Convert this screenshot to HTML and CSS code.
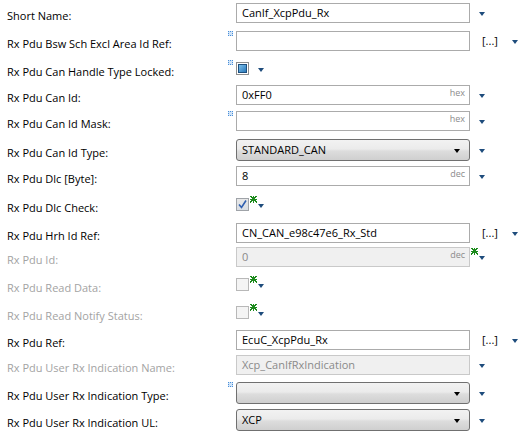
FILE: index.html
```html
<!DOCTYPE html>
<html>
<head>
<meta charset="utf-8">
<link rel="stylesheet" href="styles.css">
</head>
<body>
<div class="form">
  <div class="row gap2">
    <div class="lbl">Short Name:</div>
    <div class="ctl"><span class="mark"></span><div class="field"><span class="val">CanIf_XcpPdu_Rx</span></div><span class="star"></span><span class="menu"></span></div>
  </div>
  <div class="row gap2">
    <div class="lbl">Rx Pdu Bsw Sch Excl Area Id Ref:</div>
    <div class="ctl"><span class="mark"><i class="dot"></i></span><div class="field"></div><span class="browse">[...]</span><span class="menu"></span></div>
  </div>
  <div class="row gap0">
    <div class="lbl">Rx Pdu Can Handle Type Locked:</div>
    <div class="ctl"><span class="mark"><i class="dot"></i></span><span class="cb locked"><i></i></span><span class="star"></span><span class="menu"></span></div>
  </div>
  <div class="row gap0">
    <div class="lbl">Rx Pdu Can Id:</div>
    <div class="ctl"><span class="mark"></span><div class="field"><span class="val">0xFF0</span><span class="unit">hex</span></div><span class="star"></span><span class="menu"></span></div>
  </div>
  <div class="row gap3">
    <div class="lbl">Rx Pdu Can Id Mask:</div>
    <div class="ctl"><span class="mark"><i class="dot"></i></span><div class="field"><span class="val"></span><span class="unit">hex</span></div><span class="star"></span><span class="menu"></span></div>
  </div>
  <div class="row gap0">
    <div class="lbl">Rx Pdu Can Id Type:</div>
    <div class="ctl"><span class="mark"></span><div class="combo"><span class="val">STANDARD_CAN</span><span class="caret"></span></div><span class="star"></span><span class="menu"></span></div>
  </div>
  <div class="row gap3">
    <div class="lbl">Rx Pdu Dlc [Byte]:</div>
    <div class="ctl"><span class="mark"></span><div class="field"><span class="val">8</span><span class="unit">dec</span></div><span class="star"></span><span class="menu"></span></div>
  </div>
  <div class="row gap2">
    <div class="lbl">Rx Pdu Dlc Check:</div>
    <div class="ctl"><span class="mark"></span><span class="cb checked"><svg width="11" height="11" viewBox="0 0 11 11"><path d="M2 5.5 L4.5 8.5 L9 1.5" fill="none" stroke="#2f5fb0" stroke-width="1.6"/></svg></span><span class="star on"></span><span class="menu"></span></div>
  </div>
  <div class="row gapm2">
    <div class="lbl">Rx Pdu Hrh Id Ref:</div>
    <div class="ctl"><span class="mark"></span><div class="field"><span class="val">CN_CAN_e98c47e6_Rx_Std</span></div><span class="browse">[...]</span><span class="menu"></span></div>
  </div>
  <div class="row gap2">
    <div class="lbl dis">Rx Pdu Id:</div>
    <div class="ctl"><span class="mark"></span><div class="field disabled"><span class="val">0</span><span class="unit">dec</span></div><span class="star on"></span><span class="menu"></span></div>
  </div>
  <div class="row gap2">
    <div class="lbl dis">Rx Pdu Read Data:</div>
    <div class="ctl"><span class="mark"></span><span class="cb empty"></span><span class="star on"></span><span class="menu"></span></div>
  </div>
  <div class="row gap1">
    <div class="lbl dis">Rx Pdu Read Notify Status:</div>
    <div class="ctl"><span class="mark"></span><span class="cb empty"></span><span class="star on"></span><span class="menu"></span></div>
  </div>
  <div class="row gapm1">
    <div class="lbl">Rx Pdu Ref:</div>
    <div class="ctl"><span class="mark"></span><div class="field"><span class="val">EcuC_XcpPdu_Rx</span></div><span class="browse">[...]</span><span class="menu"></span></div>
  </div>
  <div class="row gap2">
    <div class="lbl dis">Rx Pdu User Rx Indication Name:</div>
    <div class="ctl"><span class="mark"></span><div class="field disabled"><span class="val">Xcp_CanIfRxIndication</span></div><span class="star"></span><span class="menu"></span></div>
  </div>
  <div class="row gap1">
    <div class="lbl">Rx Pdu User Rx Indication Type:</div>
    <div class="ctl"><span class="mark"><i class="dot"></i></span><div class="combo"><span class="val"></span><span class="caret"></span></div><span class="star"></span><span class="menu"></span></div>
  </div>
  <div class="row gap0">
    <div class="lbl">Rx Pdu User Rx Indication UL:</div>
    <div class="ctl"><span class="mark"></span><div class="combo"><span class="val">XCP</span><span class="caret"></span></div><span class="star"></span><span class="menu"></span></div>
  </div>
</div>
</body>
</html>
```
FILE: styles.css
```css
body {
  margin: 0;
  background: #fff;
  font-family: "Open Sans", "Noto Sans", sans-serif;
  font-size: 11px;
  color: #000;
}
.form {
  padding-left: 7px;
}
.row {
  display: flex;
  align-items: center;
  height: 25px;
}
.gap0 { margin-bottom: 1px; }
.gap1 { margin-bottom: 2px; }
.gap2 { margin-bottom: 3px; }
.gap3 { margin-bottom: 4px; }
.gapm1 { margin-bottom: 0; }
.gapm2 { margin-bottom: -1px; }
.lbl {
  width: 221px;
  flex: none;
  white-space: nowrap;
  padding-top: 5px;
}
.lbl.dis {
  color: #a3a3a3;
}
.ctl {
  display: flex;
  align-items: center;
}
.mark {
  width: 8px;
  align-self: flex-start;
  position: relative;
  height: 6px;
}
.dot {
  position: absolute;
  left: 0;
  top: 0;
  width: 3px;
  height: 3px;
  border: 1px dotted #4a8fd8;
  background: #cfe3f8;
}
.field {
  width: 234px;
  height: 20px;
  box-sizing: border-box;
  border: 1px solid #ababab;
  background: #fff;
  display: flex;
  align-items: center;
  padding: 0 5px;
  position: relative;
}
.field.disabled {
  background: #f0f0f0;
  border-color: #c9c9c9;
  color: #8a8a8a;
}
.val {
  flex: 1;
  white-space: nowrap;
}
.unit {
  position: absolute;
  right: 4px;
  top: 0;
  font-size: 9px;
  color: #8c8c8c;
}
.combo {
  width: 234px;
  height: 22px;
  box-sizing: border-box;
  border: 1px solid #707070;
  border-radius: 3px;
  background: linear-gradient(#f2f2f2, #ebebeb 45%, #dddddd 55%, #cfcfcf);
  display: flex;
  align-items: center;
  padding: 0 5px;
}
.caret {
  width: 0;
  height: 0;
  border-left: 3.5px solid transparent;
  border-right: 3.5px solid transparent;
  border-top: 4px solid #000;
  margin-right: 4px;
  margin-top: 2px;
}
.star {
  width: 9px;
  height: 18px;
  flex: none;
  position: relative;
}
.star.on::before {
  content: "";
  position: absolute;
  left: 1px;
  top: 0;
  width: 7px;
  height: 7px;
  background:
    linear-gradient(#1c8a1c, #1c8a1c) center / 1px 7px no-repeat,
    linear-gradient(#1c8a1c, #1c8a1c) center / 7px 1px no-repeat,
    linear-gradient(45deg, transparent 45%, #1c8a1c 45%, #1c8a1c 58%, transparent 58%),
    linear-gradient(-45deg, transparent 45%, #1c8a1c 45%, #1c8a1c 58%, transparent 58%);
}
.menu {
  width: 0;
  height: 0;
  border-left: 3.5px solid transparent;
  border-right: 3.5px solid transparent;
  border-top: 4px solid #1e4c7c;
  margin-top: 2px;
}
.browse {
  margin-left: 12px;
  margin-right: 14px;
  color: #000;
}
.cb {
  width: 13px;
  height: 13px;
  box-sizing: border-box;
  border: 1px solid #9a9a9a;
  display: flex;
  align-items: center;
  justify-content: center;
  flex: none;
}
.cb.locked {
  background: #fff;
  border-color: #8e8e8e;
}
.cb.locked i {
  width: 9px;
  height: 9px;
  box-sizing: border-box;
  border: 1px solid #1d4f7e;
  background: linear-gradient(135deg, #7cc0ec, #2a78b8);
}
.cb.checked {
  background: linear-gradient(#e8e8e8, #d8dde4);
  border-color: #9fa3a8;
}
.cb.empty {
  background: #f4f4f4;
  border-color: #b8b8b8;
}
```
